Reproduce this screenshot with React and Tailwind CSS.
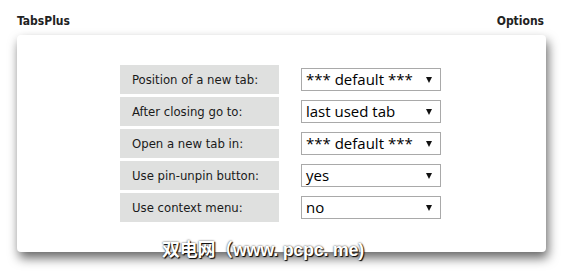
import React from "react";

const rows = [
  ["Position of a new tab:", "*** default ***"],
  ["After closing go to:", "last used tab"],
  ["Open a new tab in:", "*** default ***"],
  ["Use pin-unpin button:", "yes"],
  ["Use context menu:", "no"],
];

function Arrow() {
  return (
    <svg width="6" height="6" viewBox="0 0 6 6" className="shrink-0">
      <polygon points="0,0 6,0 3,6" fill="#111" />
    </svg>
  );
}

export default function App() {
  return (
    <div className="relative w-[570px] h-[275px] overflow-hidden bg-white">
      <div className="flex justify-between items-end h-[35px] pl-[17px] pr-[26px] pb-[8px] font-['DejaVu_Sans_Condensed','DejaVu_Sans',sans-serif] font-bold text-[12px] leading-none text-[#222]">
        <span>TabsPlus</span>
        <span>Options</span>
      </div>
      <div className="ml-[17px] w-[529px] h-[217px] bg-white rounded-[4px] shadow-[2px_6px_11px_rgba(0,0,0,0.6)]">
        <div className="flex flex-col items-center pt-[30px] gap-[3px] pr-[2px]">
          {rows.map(([label, value]) => (
            <div key={label} className="flex items-center gap-[22px]">
              <div className="w-[159px] h-[29px] bg-[#dfe0df] pl-[12px] flex items-center font-['DejaVu_Sans_Condensed','DejaVu_Sans',sans-serif] text-[13px] text-[#1a1a1a]">
                {label}
              </div>
              <div className="w-[140px] h-[23px] border border-[#a9a9a9] bg-white flex items-center justify-between pl-[4px] pr-[8px] font-['Open_Sans',sans-serif] text-[15px] text-black leading-none">
                <span className="pb-[1px]">{value}</span>
                <Arrow />
              </div>
            </div>
          ))}
        </div>
      </div>
      <div className="absolute left-[162px] top-[239px] text-white font-bold text-[18px] leading-[22px] tracking-[-0.3px] font-['Liberation_Sans','Noto_Sans_CJK_SC',sans-serif] [text-shadow:1px_1px_1px_#000,0_0_2px_#333]">
        双电网（www. pcpc. me)
      </div>
    </div>
  );
}
